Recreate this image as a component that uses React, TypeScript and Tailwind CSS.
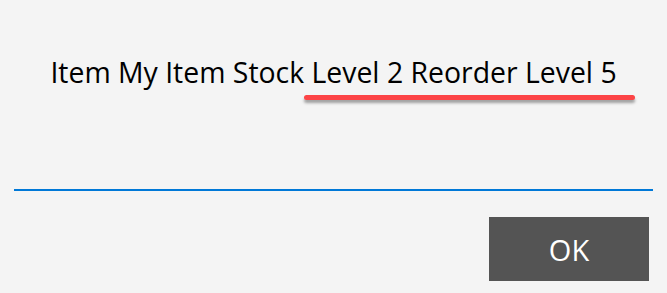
export default function App() {
  return (
    <div
      className="w-[667px] h-[293px] bg-[#f4f4f4] flex flex-col relative"
      style={{ fontFamily: '"Open Sans", "Noto Sans", sans-serif' }}
    >
      {/* Message */}
      <div className="pt-[55px] h-[120px] text-center text-[28.4px] leading-[34px] text-black">
        Item My Item Stock Level 2 Reorder Level 5
      </div>

      {/* red annotation underline */}
      <div className="absolute left-[304px] top-[95px] w-[331px] h-[5px] rounded-full bg-[#fc4446] shadow-[0_3px_3px_rgba(0,0,0,0.35)]" />

      {/* input underline */}
      <div className="mt-[69px] mx-[14px] h-[2px] bg-[#0078d7]" />

      {/* Button */}
      <div className="flex justify-end pr-[18px] pt-[26px]">
        <button className="w-[160px] h-[64px] bg-[#545454] text-white text-[29px] leading-none">
          OK
        </button>
      </div>
    </div>
  );
}
